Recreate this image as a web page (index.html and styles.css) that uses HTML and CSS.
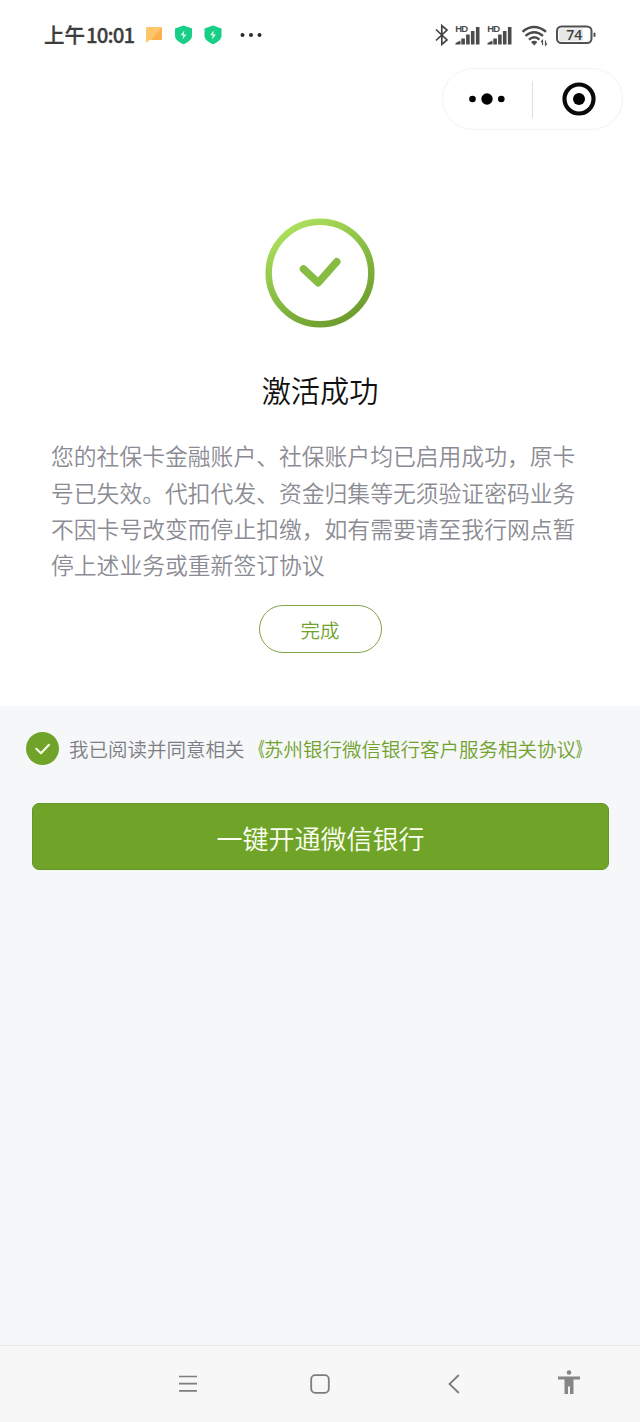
FILE: index.html
```html
<!DOCTYPE html>
<html lang="zh-CN">
<head>
<meta charset="utf-8">
<meta name="viewport" content="width=device-width, initial-scale=1">
<title>激活成功</title>
<link rel="stylesheet" href="styles.css">
</head>
<body>
<div class="screen">
  <header class="status-bar">
    <span class="clock"><span class="clock-period">上午</span><span class="clock-time">10:01</span></span>
    <svg class="status-left" width="118" height="24" viewBox="0 0 118 24">
      <path d="M1 4h14a1 1 0 0 1 1 1v11a1 1 0 0 1-1 1H3.500L0 20V5a1 1 0 0 1 1-1z" fill="#ffc569"/>
      <path d="M16 4.500V16a1 1 0 0 1-1 1H5z" fill="#fdb14e"/>
      <g id="shield">
        <path d="M37.500 2.500 46 5.500v7c0 4-3.500 6.500-8.500 8.800-5-2.300-8.500-4.800-8.500-8.800v-7z" fill="#19ce86"/>
        <path d="M38.300 7.500 34.500 12.300h2.700L36.500 16.500l4-5h-2.700z" fill="#d9fbec"/>
      </g>
      <use href="#shield" x="29.500"/>
      <g fill="#2b2b2b"><circle cx="96.500" cy="12" r="2"/><circle cx="105" cy="12" r="2"/><circle cx="113.500" cy="12" r="2"/></g>
    </svg>
    <svg class="status-right" width="162" height="26" viewBox="0 0 162 26">
      <path d="M1 7.500 12 18l-5.200 4.500v-19L12 8 1 18.500" fill="none" stroke="#444" stroke-width="1.700"/>
      <g id="signal" fill="#4b4b4b">
        <text class="hd" x="20.300" y="9.500" textLength="12.700">HD</text>
        <path d="M20.500 22.500v-1.500l5-2.500v4zM26.300 16.500h3.600v6h-3.600zM31.100 12.500h3.600v10h-3.600zM35.900 9h3.600v13.500h-3.600zM40.900 5h3.600v17.500h-3.600z"/>
      </g>
      <use href="#signal" x="32"/>
      <g fill="none" stroke="#4b4b4b" stroke-width="2.400">
        <path d="M87.500 9.800q11.500-9.500 23.500 0"/>
        <path d="M90.500 13.800q8.700-7.300 17.500 0"/>
        <path d="M94 17.600q5.300-4.600 10.500 0"/>
      </g>
      <path d="M96 20q3.200-2.500 6.400 0l-3.200 3.500z" fill="#4b4b4b"/>
      <path d="M107.500 23v-4.500l-1.500 1.500M110.500 18.500V23l1.500-1.500" fill="none" stroke="#555" stroke-width="1.200"/>
      <rect x="122" y="4.500" width="34.500" height="16.500" rx="4.500" fill="#fff" stroke="#505050" stroke-width="2"/>
      <path d="M126 6.500h22v12.500h-22a2 2 0 0 1-2-2v-8.500a2 2 0 0 1 2-2z" fill="#e8e8e8"/>
      <rect x="158.500" y="10.500" width="2" height="4.500" rx="1" fill="#505050"/>
      <text class="battery" x="139.300" y="18" text-anchor="middle">74</text>
    </svg>
  </header>

  <div class="capsule-row">
    <div class="capsule">
      <svg class="more" width="36" height="14" viewBox="0 0 36 14"><circle cx="3.500" cy="7" r="3.300"/><circle cx="18" cy="7" r="5.700"/><circle cx="32.300" cy="7" r="3.300"/></svg>
      <span class="divider"></span>
      <svg class="exit" width="34" height="34" viewBox="0 0 34 34"><circle cx="17" cy="17" r="14.500" fill="none" stroke="#0a0a0a" stroke-width="4.200"/><circle cx="17" cy="17" r="6"/></svg>
    </div>
  </div>

  <main class="result">
    <svg class="success" width="110" height="110" viewBox="0 0 110 110">
      <defs><linearGradient id="ring" gradientUnits="userSpaceOnUse" x1="24" y1="10" x2="80" y2="104"><stop offset="0" stop-color="#acdf5d"/><stop offset=".5" stop-color="#88bd42"/><stop offset="1" stop-color="#6d9c2d"/></linearGradient></defs>
      <circle cx="55" cy="55" r="51.300" fill="none" stroke="url(#ring)" stroke-width="6.500"/>
      <path d="M38.500 51 53.200 64.700 71.800 43.700" fill="none" stroke="#86bc42" stroke-width="7.500" stroke-linecap="round" stroke-linejoin="round"/>
    </svg>
    <h1 class="title">激活成功</h1>
    <p class="message">您的社保卡金融账户、社保账户均已启用成功，原卡<br>号已失效。代扣代发、资金归集等无须验证密码业务<br>不因卡号改变而停止扣缴，如有需要请至我行网点暂<br>停上述业务或重新签订协议</p>
    <button class="done">完成</button>
  </main>

  <section class="activate">
    <div class="agreement">
      <svg class="check" width="33" height="33" viewBox="0 0 33 33"><circle cx="16.500" cy="16.500" r="16.500" fill="#70a428"/><path d="M10.300 16.800 15 21.200 23 12.800" fill="none" stroke="#f4fbe9" stroke-width="2.200" stroke-linecap="round" stroke-linejoin="round"/></svg>
      <span class="agreement-text">我已阅读并同意相关<a class="link"><span class="bracket bracket-open">《</span>苏州银行微信银行客户服务相关协议<span class="bracket bracket-close">》</span></a></span>
    </div>
    <button class="primary">一键开通微信银行</button>
  </section>

  <nav class="nav-bar">
    <svg class="nav-menu" width="18" height="18" viewBox="0 0 18 18"><path d="M0 1.500h18M0 8.700h18M0 15.800h18" stroke="#7d7d7d" stroke-width="1.700"/></svg>
    <svg class="nav-home" width="20" height="20" viewBox="0 0 20 20"><rect x="1.200" y="1.200" width="17.600" height="17.600" rx="4" fill="none" stroke="#7d7d7d" stroke-width="1.800"/></svg>
    <svg class="nav-back" width="12" height="20" viewBox="0 0 12 20"><path d="M10.800 1 1.500 10l9.300 9" fill="none" stroke="#7d7d7d" stroke-width="1.800"/></svg>
    <svg class="nav-access" width="22" height="24" viewBox="0 0 22 24" fill="#868686"><circle cx="11" cy="2.500" r="2.300"/><path d="M0 6.500h22v3h-6.500V24H12v-7.500h-2V24H6.500V9.500H0z"/></svg>
  </nav>
</div>
</body>
</html>
```
FILE: styles.css
```css
* { box-sizing: border-box; }

body {
  margin: 0;
  background: #fff;
  font-family: "Noto Sans CJK SC", sans-serif;
}

.screen {
  display: flex;
  flex-direction: column;
  width: 640px;
  height: 1422px;
}

svg { display: block; flex: none; }

button {
  display: flex;
  align-items: center;
  justify-content: center;
  padding: 0;
  font-family: inherit;
}

.status-bar {
  display: flex;
  align-items: center;
  height: 68px;
  padding: 2px 0 0 44px;
}

.clock {
  display: flex;
  align-items: center;
  width: 102px;
  margin-top: -2px;
  color: #3d3d3d;
  font-weight: 500;
  line-height: 30px;
  -webkit-text-stroke: 0.3px #3d3d3d;
}

.clock-period { font-size: 20.5px; }
.clock-time { margin-left: 1px; font-size: 20.5px; letter-spacing: -0.9px; }
.status-left { margin-top: -1px; }
.status-right { margin-left: 171px; }
.hd { font: 700 9.5px "Liberation Sans", sans-serif; }
.battery { font: 600 14px "Open Sans", sans-serif; fill: #3f3f3f; }

.capsule-row {
  display: flex;
  justify-content: flex-end;
  padding-right: 17px;
}

.capsule {
  display: flex;
  align-items: center;
  width: 181px;
  height: 62px;
  padding-left: 26px;
  border: 1px solid #f3f3f3;
  border-radius: 31px;
}

.divider {
  width: 1px;
  height: 37px;
  margin: 0 29px 0 27px;
  background: #dedede;
}

.result {
  display: flex;
  flex-direction: column;
  align-items: center;
  height: 576px;
  padding-top: 88px;
}

.title {
  margin: 39px 0 0;
  color: #111;
  font-size: 29.2px;
  font-weight: 350;
  line-height: 44px;
}

.message {
  align-self: flex-start;
  margin: 27.4px 0 0 51px;
  color: #8b8c93;
  font-size: 22.8px;
  font-weight: 350;
  line-height: 36.2px;
  white-space: nowrap;
}

.done {
  width: 123px;
  height: 48px;
  margin-top: 21.4px;
  padding-top: 2px;
  border: 1.500px solid #83a34a;
  border-radius: 24px;
  background: #fff;
  color: #72a22e;
  font-size: 19.5px;
  font-weight: 350;
}

.activate {
  flex: 1;
  padding: 26px 32px 0;
  background: #f5f7f9;
}

.agreement {
  display: flex;
  align-items: center;
  gap: 10px;
  height: 33px;
  margin-left: -6px;
}

.agreement-text {
  color: #7d7e84;
  font-size: 19.5px;
  font-weight: 350;
  line-height: 32px;
  white-space: nowrap;
}

.link { color: #72a22e; }

.bracket { display: inline-block; -webkit-text-stroke: 0.3px #72a22e; }
.bracket-open { transform: translateX(3.6px) scaleX(0.64); }
.bracket-close { transform: translateX(-3.6px) scaleX(0.64); }

.primary {
  width: 577px;
  height: 67px;
  margin-top: 38px;
  padding-top: 1px;
  border: 1px solid #65952a;
  border-radius: 7px;
  background: #70a428;
  color: #fbfff2;
  font-size: 26px;
  font-weight: 350;
}

.nav-bar {
  display: flex;
  align-items: center;
  height: 77px;
  padding-left: 179px;
  border-top: 1px solid #e8eaeb;
  background: #f7f7f7;
}

.nav-home { margin-left: 113px; }
.nav-back { margin-left: 118px; }
.nav-access { margin: -4px 0 0 98px; }
```
